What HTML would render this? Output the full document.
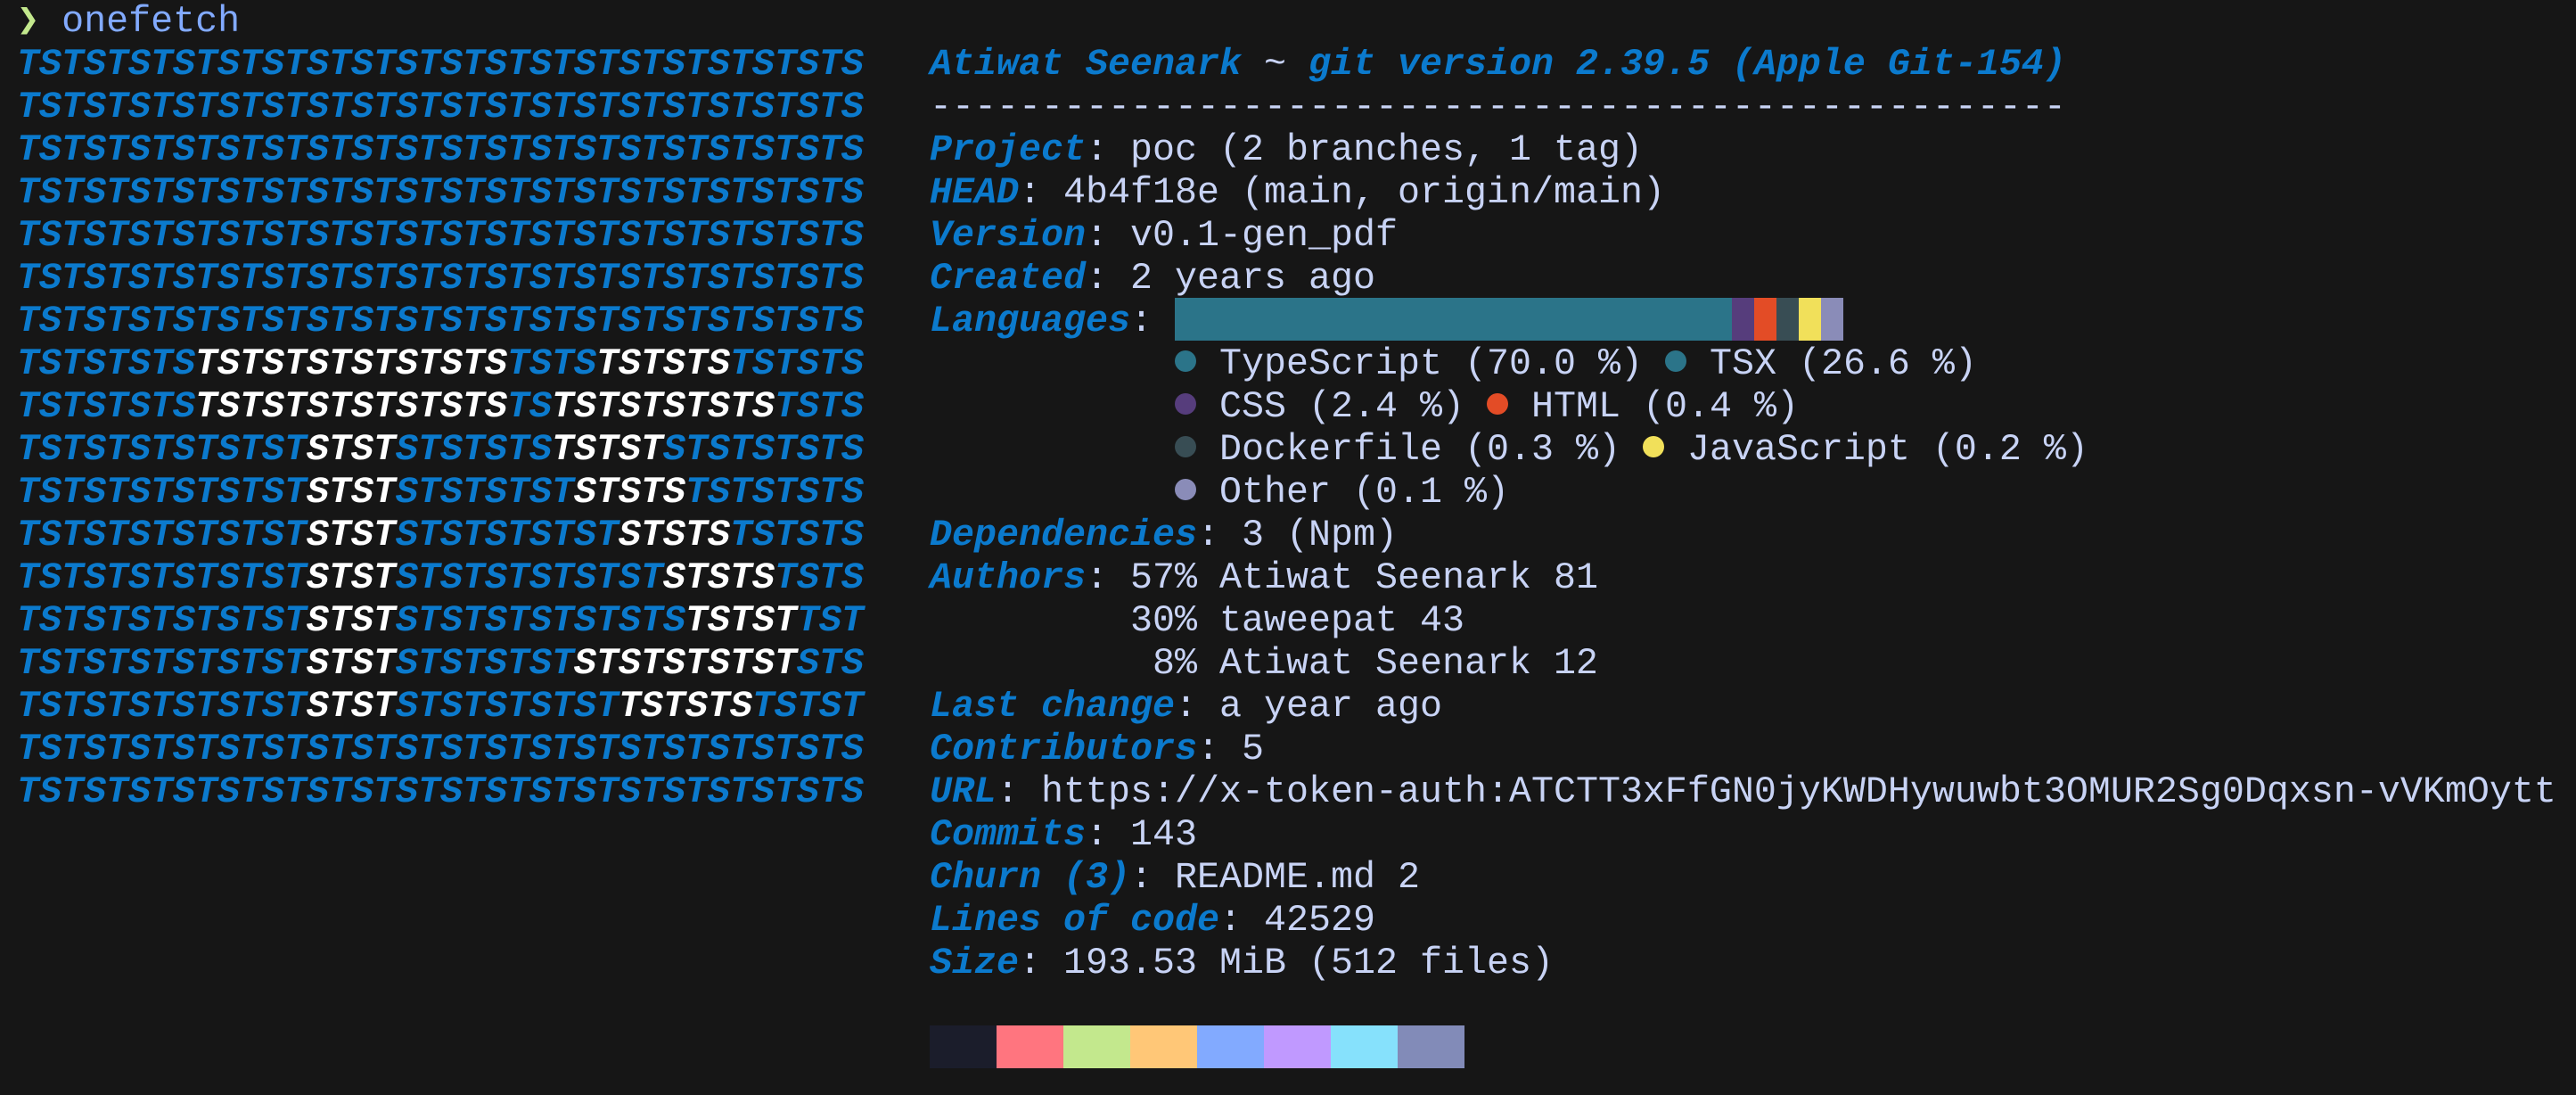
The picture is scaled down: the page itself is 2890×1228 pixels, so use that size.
<!DOCTYPE html>
<html><head><meta charset="utf-8"><style>
html,body{margin:0;padding:0;background:#161616;width:2890px;height:1228px;overflow:hidden}
body{font-family:"Liberation Mono","DejaVu Sans Mono",monospace;font-size:41.67px;color:#c8d3f5}
.l{position:absolute;height:48px;line-height:48px;white-space:pre;margin-top:2px}
.b{color:#0b7acd;font-weight:bold;font-style:italic}
.w{color:#ffffff;font-weight:bold;font-style:italic}
.logo{left:19px}
.r{left:1043px}
.d{display:inline-block;width:24px;height:24px;border-radius:50%;vertical-align:middle;margin:0 0.5px;position:relative;top:-3px}
.bar{position:absolute;top:334px;height:48px}
.sw{position:absolute;top:1150px;height:48px;width:75px}
</style></head><body>
<div class="l" style="top:-2px;left:19px"><span style="color:#c3e88d">❯</span> <span style="color:#82aaff">onefetch</span></div>

<div class="l logo b" style="top:46px">TSTSTSTSTSTSTSTSTSTSTSTSTSTSTSTSTSTSTS</div>
<div class="l logo b" style="top:94px">TSTSTSTSTSTSTSTSTSTSTSTSTSTSTSTSTSTSTS</div>
<div class="l logo b" style="top:142px">TSTSTSTSTSTSTSTSTSTSTSTSTSTSTSTSTSTSTS</div>
<div class="l logo b" style="top:190px">TSTSTSTSTSTSTSTSTSTSTSTSTSTSTSTSTSTSTS</div>
<div class="l logo b" style="top:238px">TSTSTSTSTSTSTSTSTSTSTSTSTSTSTSTSTSTSTS</div>
<div class="l logo b" style="top:286px">TSTSTSTSTSTSTSTSTSTSTSTSTSTSTSTSTSTSTS</div>
<div class="l logo b" style="top:334px">TSTSTSTSTSTSTSTSTSTSTSTSTSTSTSTSTSTSTS</div>
<div class="l logo b" style="top:382px">TSTSTSTS<span class="w">TSTSTSTSTSTSTS</span>TSTS<span class="w">TSTSTS</span>TSTSTS</div>
<div class="l logo b" style="top:430px">TSTSTSTS<span class="w">TSTSTSTSTSTSTS</span>TS<span class="w">TSTSTSTSTS</span>TSTS</div>
<div class="l logo b" style="top:478px">TSTSTSTSTSTST<span class="w">STST</span>STSTSTS<span class="w">TSTST</span>STSTSTSTS</div>
<div class="l logo b" style="top:526px">TSTSTSTSTSTST<span class="w">STST</span>STSTSTST<span class="w">STSTS</span>TSTSTSTS</div>
<div class="l logo b" style="top:574px">TSTSTSTSTSTST<span class="w">STST</span>STSTSTSTST<span class="w">STSTS</span>TSTSTS</div>
<div class="l logo b" style="top:622px">TSTSTSTSTSTST<span class="w">STST</span>STSTSTSTSTST<span class="w">STSTS</span>TSTS</div>
<div class="l logo b" style="top:670px">TSTSTSTSTSTST<span class="w">STST</span>STSTSTSTSTSTS<span class="w">TSTST</span>TST</div>
<div class="l logo b" style="top:718px">TSTSTSTSTSTST<span class="w">STST</span>STSTSTST<span class="w">STSTSTSTST</span>STS</div>
<div class="l logo b" style="top:766px">TSTSTSTSTSTST<span class="w">STST</span>STSTSTSTST<span class="w">TSTSTS</span>TSTST</div>
<div class="l logo b" style="top:814px">TSTSTSTSTSTSTSTSTSTSTSTSTSTSTSTSTSTSTS</div>
<div class="l logo b" style="top:862px">TSTSTSTSTSTSTSTSTSTSTSTSTSTSTSTSTSTSTS</div>

<div class="l r" style="top:46px"><span class="b">Atiwat Seenark</span> ~ <span class="b">git version 2.39.5 (Apple Git-154)</span></div>
<div class="l r" style="top:94px">---------------------------------------------------</div>
<div class="l r" style="top:142px"><span class="b">Project</span>: poc (2 branches, 1 tag)</div>
<div class="l r" style="top:190px"><span class="b">HEAD</span>: 4b4f18e (main, origin/main)</div>
<div class="l r" style="top:238px"><span class="b">Version</span>: v0.1-gen_pdf</div>
<div class="l r" style="top:286px"><span class="b">Created</span>: 2 years ago</div>
<div class="l r" style="top:334px"><span class="b">Languages</span>: </div>
<div class="bar" style="left:1318px;width:625px;background:#2b7489"></div>
<div class="bar" style="left:1943px;width:25px;background:#563d7c"></div>
<div class="bar" style="left:1968px;width:25px;background:#e34c26"></div>
<div class="bar" style="left:1993px;width:25px;background:#384d54"></div>
<div class="bar" style="left:2018px;width:25px;background:#f1e05a"></div>
<div class="bar" style="left:2043px;width:25px;background:#8a8cb8"></div>
<div class="l r" style="top:382px">           <span class="d" style="background:#2b7489"></span> TypeScript (70.0 %) <span class="d" style="background:#2b7489"></span> TSX (26.6 %)</div>
<div class="l r" style="top:430px">           <span class="d" style="background:#563d7c"></span> CSS (2.4 %) <span class="d" style="background:#e34c26"></span> HTML (0.4 %)</div>
<div class="l r" style="top:478px">           <span class="d" style="background:#384d54"></span> Dockerfile (0.3 %) <span class="d" style="background:#f1e05a"></span> JavaScript (0.2 %)</div>
<div class="l r" style="top:526px">           <span class="d" style="background:#8a8cb8"></span> Other (0.1 %)</div>
<div class="l r" style="top:574px"><span class="b">Dependencies</span>: 3 (Npm)</div>
<div class="l r" style="top:622px"><span class="b">Authors</span>: 57% Atiwat Seenark 81</div>
<div class="l r" style="top:670px">         30% taweepat 43</div>
<div class="l r" style="top:718px">          8% Atiwat Seenark 12</div>
<div class="l r" style="top:766px"><span class="b">Last change</span>: a year ago</div>
<div class="l r" style="top:814px"><span class="b">Contributors</span>: 5</div>
<div class="l r" style="top:862px"><span class="b">URL</span>: https://x-token-auth:ATCTT3xFfGN0jyKWDHywuwbt3OMUR2Sg0Dqxsn-vVKmOytt</div>
<div class="l r" style="top:910px"><span class="b">Commits</span>: 143</div>
<div class="l r" style="top:958px"><span class="b">Churn (3)</span>: README.md 2</div>
<div class="l r" style="top:1006px"><span class="b">Lines of code</span>: 42529</div>
<div class="l r" style="top:1054px"><span class="b">Size</span>: 193.53 MiB (512 files)</div>

<div class="sw" style="left:1043px;background:#1b1d2b"></div>
<div class="sw" style="left:1118px;background:#ff757f"></div>
<div class="sw" style="left:1193px;background:#c3e88d"></div>
<div class="sw" style="left:1268px;background:#ffc777"></div>
<div class="sw" style="left:1343px;background:#82aaff"></div>
<div class="sw" style="left:1418px;background:#c099ff"></div>
<div class="sw" style="left:1493px;background:#86e1fc"></div>
<div class="sw" style="left:1568px;background:#828bb8"></div>
</body></html>
